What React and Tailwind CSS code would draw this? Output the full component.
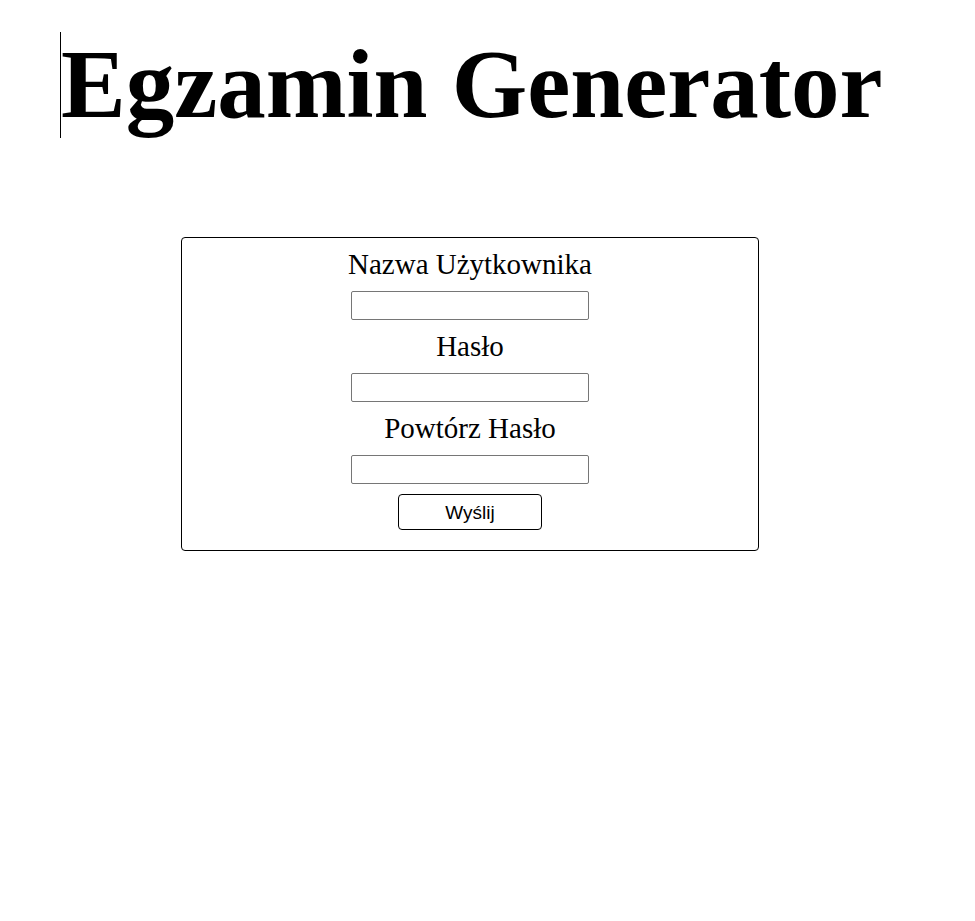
import React from "react";

const FIELDS = ["Nazwa Użytkownika", "Hasło", "Powtórz Hasło"];

export default function App() {
  return (
    <div className="min-h-[921px] bg-white text-black">
      {/* Heading with text caret */}
      <h1
        className="relative ml-[60px] pt-[32px] font-bold text-[97px] leading-[106px] whitespace-nowrap"
        style={{ fontFamily: '"Liberation Serif", "Times New Roman", serif' }}
      >
        <span className="absolute left-0 top-[32px] h-[106px] border-l border-black" />
        <span className="pl-[1px]">Egzamin Generator</span>
      </h1>

      {/* Register form */}
      <form
        className="ml-[181px] mt-[99px] w-[578px] border border-black rounded-[4px] pt-[11px] pb-[20px] flex flex-col items-center"
        onSubmit={(e) => e.preventDefault()}
      >
        {FIELDS.map((label, i) => (
          <div key={label} className={`flex flex-col items-center ${i > 0 ? "mt-[11px]" : ""}`}>
            <label
              className="block text-[29px] leading-[31px]"
              style={{ fontFamily: '"Liberation Serif", "Times New Roman", serif' }}
            >
              {label}
            </label>
            <input
              type={i === 0 ? "text" : "password"}
              className="mt-[11px] w-[238px] h-[29px] border border-[#767676] rounded-[2px] bg-white outline-none"
            />
          </div>
        ))}
        <button
          type="submit"
          className="mt-[10px] w-[144px] h-[36px] border border-black rounded-[4px] bg-white text-[19px] leading-none"
          style={{ fontFamily: '"Liberation Sans", Arial, sans-serif' }}
        >
          Wyślij
        </button>
      </form>
    </div>
  );
}
